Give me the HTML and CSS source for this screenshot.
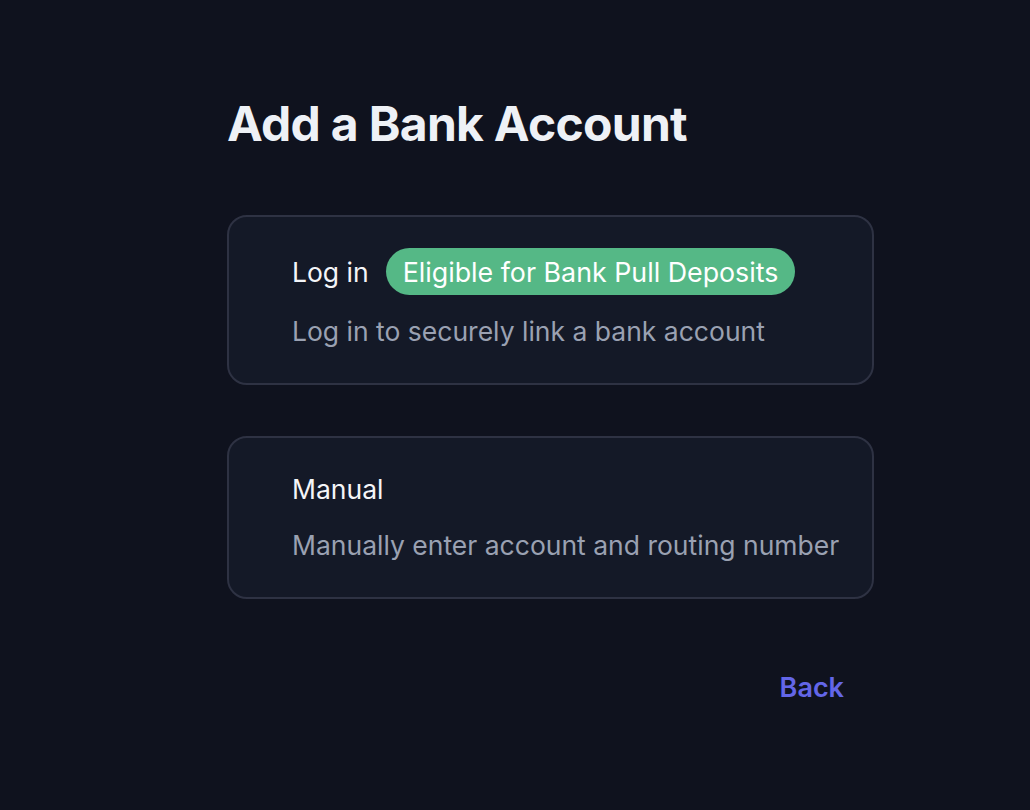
FILE: index.html
```html
<!DOCTYPE html>
<html>
<head>
<meta charset="utf-8">
<link rel="stylesheet" href="styles.css">
</head>
<body>
<main class="page">
  <h1 class="title">Add a Bank Account</h1>
  <div class="options">
    <div class="card">
      <div class="card-head">
        <span class="card-title">Log in</span>
        <span class="badge">Eligible for Bank Pull Deposits</span>
      </div>
      <div class="card-sub">Log in to securely link a bank account</div>
    </div>
    <div class="card">
      <div class="card-head">
        <span class="card-title">Manual</span>
      </div>
      <div class="card-sub">Manually enter account and routing number</div>
    </div>
  </div>
  <div class="actions">
    <a class="back">Back</a>
  </div>
</main>
</body>
</html>
```

FILE: styles.css
```css
html, body {
  margin: 0;
  padding: 0;
  background: #0f121e;
}
body {
  font-family: Inter, "Noto Sans", sans-serif;
  color: #f1f3f7;
}
.page {
  width: 647px;
  margin-left: 227px;
  padding-top: 95px;
}
.title {
  margin: 0;
  font-size: 48px;
  font-weight: 700;
  letter-spacing: -0.7px;
  line-height: 58px;
  color: #eef1f6;
}
.options {
  margin-top: 62px;
  display: flex;
  flex-direction: column;
  gap: 51px;
}
.card {
  box-sizing: border-box;
  border: 2px solid #2e3243;
  border-radius: 20px;
  background: #141927;
  padding: 31px 30px 35px 63px;
}
.card-head {
  display: flex;
  align-items: center;
  gap: 17px;
  min-height: 40px;
}
.card-title {
  font-size: 26.5px;
  line-height: 40px;
  color: #f4f5f8;
}
.badge {
  display: inline-flex;
  align-items: center;
  height: 47px;
  padding: 0 17px;
  border-radius: 24px;
  background: #55b886;
  color: #ffffff;
  font-size: 26.8px;
}
.card-sub {
  margin-top: 20px;
  font-size: 26.5px;
  line-height: 33px;
  color: #9aa1b2;
}
.actions {
  display: flex;
  justify-content: flex-end;
  margin-top: 72px;
  padding-right: 30px;
}
.back {
  font-size: 27px;
  font-weight: 600;
  color: #6366e8;
  line-height: 34px;
}
```
